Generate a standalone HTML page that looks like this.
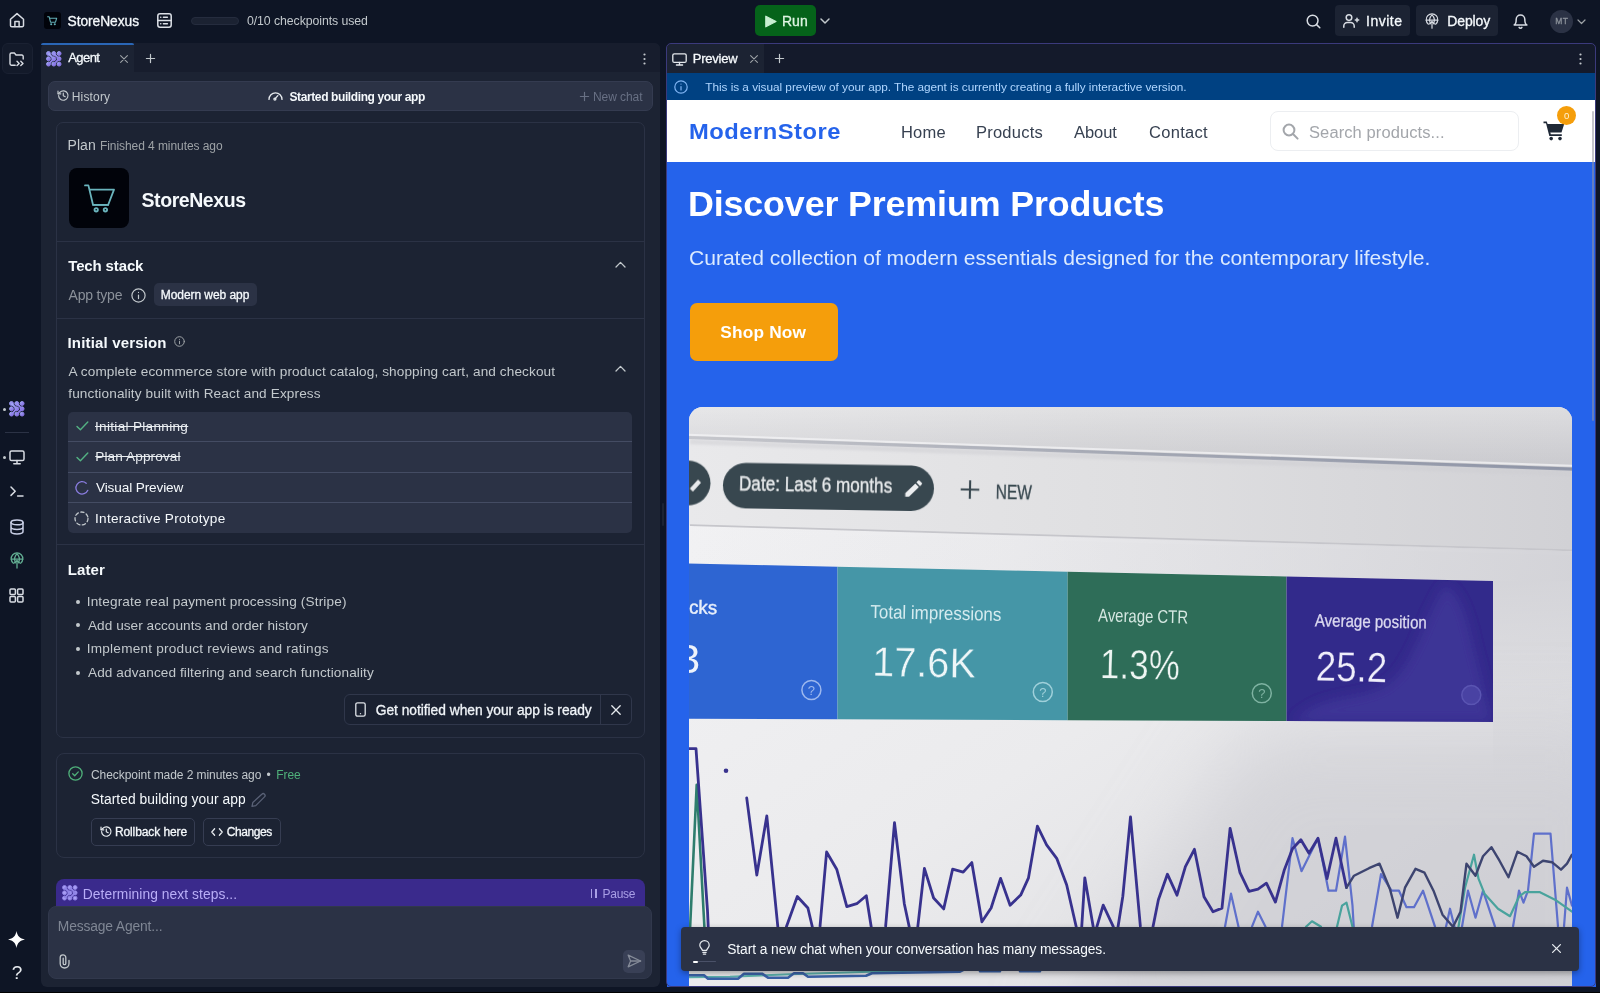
<!DOCTYPE html>
<html lang="en">
<head>
<meta charset="utf-8">
<title>StoreNexus - Replit</title>
<style>
*{box-sizing:border-box;margin:0;padding:0}
html,body{width:1600px;height:993px;overflow:hidden;background:#0e1525;color:#f5f9fc;font-family:"Liberation Sans",sans-serif;font-size:13px}
.b{position:absolute}
svg{display:block;position:absolute;overflow:visible}
.i{fill:none;stroke:currentColor;stroke-width:1.5;stroke-linecap:round;stroke-linejoin:round}
.t{position:absolute;white-space:nowrap;line-height:1;font-kerning:normal}
.wm{-webkit-text-stroke:.3px currentColor}
.ws{-webkit-text-stroke:.55px currentColor}
.wb{font-weight:700}
</style>
</head>
<body>
<!-- ===== top bar ===== -->
<div class="b" style="left:0;top:0;width:1600px;height:43px;background:#0e1525"></div>
<svg class="i" style="left:9px;top:12px;color:#d8dce3" width="16" height="16" viewBox="0 0 16 16"><path d="M1.5 7.2 8 1.6l6.500 5.600V13.400a1.300 1.300 0 0 1-1.300 1.300H2.800A1.300 1.300 0 0 1 1.500 13.400Z"/><path d="M5.900 14.600V9.400h4.200v5.200"/></svg>
<div class="b" style="left:44px;top:12px;width:17px;height:17px;background:#01030a;border-radius:3px"></div>
<svg class="i" style="left:47px;top:16px;color:#63aeb6;stroke-width:1.1" width="11" height="10" viewBox="0 0 11 10"><path d="M.6.800h1.600l1.300 5.400h5l1.200-4H2.600"/><circle cx="4.200" cy="8.300" r=".5"/><circle cx="7.800" cy="8.300" r=".5"/></svg>
<svg class="i" style="left:157px;top:13px;color:#dde1e8;stroke-width:1.500" width="15" height="15" viewBox="0 0 15 15"><rect x=".8" y=".8" width="13.400" height="13.400" rx="2.200"/><path d="M.8 7.500h13.400M3.700 4.200h.1M6.400 4.200h4M3.700 10.800h.1M6.400 10.800h4"/></svg>
<div class="b" style="left:190.500px;top:17px;width:48.500px;height:7.800px;border-radius:4px;background:#1b2232;border:1px solid #252c3e"></div>
<!-- run -->
<div class="b" style="left:755px;top:5px;width:61px;height:31px;border-radius:5px;background:#05631a"></div>
<svg style="left:765px;top:14.500px" width="12" height="13" viewBox="0 0 12 13"><path d="M.8 1.200v10.600L11 6.500Z" fill="#c9efd2" stroke="#c9efd2" stroke-width="1.200" stroke-linejoin="round"/></svg>
<svg class="i" style="left:819.500px;top:18px;color:#c2c8cc" width="10" height="6" viewBox="0 0 10 6"><path d="M1 1l4 4 4-4"/></svg>
<!-- right cluster -->
<svg class="i" style="left:1306px;top:14px;color:#d8dce3" width="15" height="15" viewBox="0 0 15 15"><circle cx="6.600" cy="6.600" r="5.400"/><path d="M10.600 10.600l3.200 3.200"/></svg>
<div class="b" style="left:1335px;top:5px;width:75px;height:31px;border-radius:4px;background:#1c2333"></div>
<svg class="i" style="left:1343px;top:13.500px;color:#d8dce3" width="17" height="14" viewBox="0 0 17 14"><circle cx="6" cy="3.600" r="2.800"/><path d="M.8 13.200v-1.200a3.600 3.600 0 0 1 3.600-3.600h3.200a3.600 3.600 0 0 1 3.600 3.600v1.200"/><path d="M14 4.300v3.400M12.300 6h3.400"/></svg>
<div class="b" style="left:1416px;top:5px;width:82px;height:31px;border-radius:4px;background:#1c2333"></div>
<svg class="i" style="left:1425px;top:13.500px;color:#d8dce3;stroke-width:1.200" width="14" height="15" viewBox="0 0 14 15"><path d="M3.400 10.200A5.800 5.800 0 1 1 10.600 10.200"/><path d="M1.300 6.200h11.400M7 .8c-2.600 2.600-2.600 6.600-1.600 9M7 .8c2.600 2.600 2.600 6.600 1.600 9"/><path d="M7 14.200V7.400M4.600 9.800 7 7.400l2.400 2.400"/></svg>
<svg class="i" style="left:1513px;top:13px;color:#d8dce3" width="15" height="16" viewBox="0 0 15 16"><path d="M3.200 6.200a4.300 4.300 0 0 1 8.600 0c0 4.600 2 5.800 2 5.800H1.200s2-1.200 2-5.800"/><path d="M6.100 14.400a1.600 1.600 0 0 0 2.800 0"/></svg>
<div class="b" style="left:1550px;top:9.500px;width:23px;height:23px;border-radius:50%;background:#2b3245"></div>
<svg class="i" style="left:1577px;top:18.500px;color:#9da2a6;stroke-width:1.200" width="9" height="6" viewBox="0 0 9 6"><path d="M1 1l3.500 3.500L8 1"/></svg>

<!-- ===== sidebar ===== -->
<div class="b" style="left:1.500px;top:43px;width:31px;height:31px;border-radius:6px;background:#131a2a;border:1px solid #1a2132"></div>
<svg class="i" style="left:8.500px;top:51.500px;color:#d8dce3;stroke-width:1.400" width="16" height="15" viewBox="0 0 16 15"><path d="M6.200 13.200H2.400A1.400 1.400 0 0 1 1 11.800V2.400A1.400 1.400 0 0 1 2.400 1h3l1.600 2h5.800a1.400 1.400 0 0 1 1.400 1.400V7"/><path d="M8 9.200l2.200 2.200L8 13.600M11.800 9.200l2.200 2.200-2.200 2.200"/></svg>
<div class="b" style="left:3px;top:407.500px;width:3px;height:3px;border-radius:50%;background:#c2c8cc"></div>
<svg style="left:8.600px;top:401.200px" width="15.600" height="15.600" viewBox="0 0 15.600 15.600"><use href="#agico" fill="url(#agg)" stroke="url(#agg)"/></svg>
<div class="b" style="left:5px;top:432px;width:24px;height:1px;background:#2b3245"></div>
<div class="b" style="left:3px;top:455.500px;width:3px;height:3px;border-radius:50%;background:#c2c8cc"></div>
<svg class="i" style="left:9px;top:449.500px;color:#d8dce3" width="16" height="15" viewBox="0 0 16 15"><rect x="1" y="1" width="14" height="9.600" rx="1.600"/><path d="M8 10.600v3M4.800 13.800h6.400"/></svg>
<svg class="i" style="left:10px;top:486px;color:#d8dce3" width="14" height="11" viewBox="0 0 14 11"><path d="M1 1l4.200 4.200L1 9.400M7.600 10h5.400"/></svg>
<svg class="i" style="left:9.500px;top:519px;color:#c9cfe6" width="14" height="16" viewBox="0 0 14 16"><ellipse cx="7" cy="3.400" rx="6" ry="2.400"/><path d="M1 3.400v9.200c0 1.300 2.700 2.400 6 2.400s6-1.100 6-2.400V3.400M1 8c0 1.300 2.700 2.400 6 2.400S13 9.300 13 8"/></svg>
<svg class="i" style="left:9.500px;top:553px;color:#62ad92;stroke-width:1.300" width="14" height="16" viewBox="0 0 14 16"><path d="M3.400 10.200A5.800 5.800 0 1 1 10.600 10.200"/><path d="M1.300 6.200h11.400M7 .8c-2.600 2.600-2.600 6.600-1.600 9M7 .8c2.600 2.600 2.600 6.600 1.600 9"/><path d="M7 15V7.400M4.600 9.800 7 7.400l2.400 2.400"/></svg>
<svg class="i" style="left:9px;top:587.500px;color:#d8dce3" width="15" height="15" viewBox="0 0 15 15"><rect x="1" y="1" width="5.400" height="5.400" rx="1"/><rect x="8.600" y="1" width="5.400" height="5.400" rx="1"/><rect x="1" y="8.600" width="5.400" height="5.400" rx="1"/><rect x="8.600" y="8.600" width="5.400" height="5.400" rx="1"/></svg>
<svg style="left:8.200px;top:931.300px" width="17" height="17" viewBox="0 0 16 16"><path d="M8 0C8.800 4.800 11.200 7.200 16 8 11.200 8.800 8.800 11.200 8 16 7.200 11.200 4.800 8.800 0 8 4.800 7.200 7.200 4.800 8 0Z" fill="#ffffff"/></svg>
<!-- ===== agent panel ===== -->
<svg width="0" height="0" style="left:0;top:0"><defs>
<g id="agico"><circle cx="2.500" cy="2.500" r="1.950"/><circle cx="7.800" cy="2.500" r="1.950"/><circle cx="13.100" cy="2.500" r="1.950"/><circle cx="2.500" cy="7.800" r="1.950"/><circle cx="7.800" cy="7.800" r="1.950"/><circle cx="13.100" cy="7.800" r="1.950"/><circle cx="2.500" cy="13.100" r="1.950"/><circle cx="7.800" cy="13.100" r="1.950"/><circle cx="13.100" cy="13.100" r="1.950"/><path d="M2.500 2.500 7.800 7.800 2.500 13.100M7.800 2.500 13.100 7.800 7.800 13.100" stroke-width="1.900" fill="none" stroke-linejoin="round"/></g>
<linearGradient id="agg" x1="0" y1="0" x2="1" y2="1"><stop offset="0" stop-color="#a4b0f6"/><stop offset=".55" stop-color="#8f80ea"/><stop offset="1" stop-color="#8672e2"/></linearGradient>
</defs></svg>
<div class="b" style="left:40.500px;top:42.500px;width:619.500px;height:944.500px;background:#1c2333;border-radius:6px"></div>
<div class="b" style="left:134px;top:42.500px;width:526px;height:29.800px;background:#171d2d;border-radius:0 6px 0 0"></div>
<div class="b" style="left:41px;top:42.500px;width:93px;height:2px;background:#2a66b6;border-radius:4px 4px 0 0"></div>
<svg style="left:45.900px;top:50.700px" width="15.600" height="15.600" viewBox="0 0 15.600 15.600"><use href="#agico" fill="url(#agg)" stroke="url(#agg)"/></svg>
<svg class="i" style="left:120px;top:55px;color:#9da2a6;stroke-width:1.100" width="8" height="8" viewBox="0 0 8 8"><path d="M.6.600l6.800 6.800M7.400.600.600 7.400"/></svg>
<svg class="i" style="left:145.500px;top:54px;color:#c2c8cc;stroke-width:1.200" width="9" height="9" viewBox="0 0 9 9"><path d="M4.500.400v8.200M.400 4.500h8.200"/></svg>
<svg style="left:643px;top:52.500px" width="3" height="12" viewBox="0 0 3 12"><circle cx="1.500" cy="1.500" r="1.100" fill="#c2c8cc"/><circle cx="1.500" cy="6" r="1.100" fill="#c2c8cc"/><circle cx="1.500" cy="10.500" r="1.100" fill="#c2c8cc"/></svg>
<div class="b" style="left:662.200px;top:502.600px;width:2.100px;height:23.600px;border-radius:1px;background:#1c2333"></div>
<!-- history bar -->
<div class="b" style="left:48px;top:81px;width:604.500px;height:29.500px;background:#2b3245;border-radius:7px;border:1px solid #343b50"></div>
<svg class="i" style="left:56.500px;top:90.300px;color:#c2c8cc;stroke-width:1.200" width="12" height="11" viewBox="0 0 12 11"><path d="M1.600 5.500a4.700 4.700 0 1 0 1.400-3.300L1.200 3.700"/><path d="M1 1v2.800h2.800M6.300 3v2.700l1.900 1"/></svg>
<svg class="i" style="left:267.500px;top:91px;color:#e6eaee;stroke-width:1.300" width="15" height="10" viewBox="0 0 15 10"><path d="M1 8.400a6.500 6.500 0 0 1 13 0"/><path d="M7.200 7.700 9.800 4.600"/><circle cx="6.900" cy="8.100" r="1"/></svg>
<svg class="i" style="left:579.500px;top:91.500px;color:#687084;stroke-width:1.200" width="9" height="9" viewBox="0 0 9 9"><path d="M4.500.400v8.200M.400 4.500h8.200"/></svg>
<!-- plan card -->
<div class="b" style="left:56px;top:121.500px;width:588.500px;height:616.500px;border:1px solid #2b3245;border-radius:7px"></div>
<div class="b" style="left:57px;top:241px;width:586.500px;height:1px;background:#2b3245"></div>
<div class="b" style="left:57px;top:318px;width:586.500px;height:1px;background:#2b3245"></div>
<div class="b" style="left:57px;top:544px;width:586.500px;height:1px;background:#2b3245"></div>
<div class="b" style="left:69px;top:168px;width:60px;height:60px;border-radius:8px;background:#01030a"></div>
<svg class="i" style="left:83.500px;top:184px;color:#6ab4bd;stroke-width:1.800" width="32" height="29" viewBox="0 0 32 29"><path d="M1 1.400h3.400l4.600 19.400h15.200l5.800-15.200H6.200"/><path d="M9 20.800h15.200"/><circle cx="12.200" cy="25.800" r="1.700"/><circle cx="21.400" cy="25.800" r="1.700"/></svg>
<svg class="i" style="left:614.500px;top:261px;color:#c2c8cc;stroke-width:1.300" width="11" height="7" viewBox="0 0 11 7"><path d="M1 6l4.500-4.600L10 6"/></svg>
<svg class="i" style="left:614.500px;top:364.500px;color:#c2c8cc;stroke-width:1.300" width="11" height="7" viewBox="0 0 11 7"><path d="M1 6l4.500-4.600L10 6"/></svg>
<svg class="i" style="left:130.500px;top:287.500px;color:#c2c8cc;stroke-width:1.200" width="15" height="15" viewBox="0 0 15 15"><circle cx="7.500" cy="7.500" r="6.600"/><path d="M7.500 7v3.600M7.500 4.400v.1"/></svg>
<svg class="i" style="left:174.200px;top:336px;color:#9da2a6;stroke-width:1" width="11" height="11" viewBox="0 0 11 11"><circle cx="5.500" cy="5.500" r="4.800"/><path d="M5.500 5.200v2.600M5.500 3.300v.1"/></svg>
<div class="b" style="left:153.800px;top:283.400px;width:102.800px;height:23.100px;border-radius:5px;background:#2b3245"></div>
<!-- tasks -->
<div class="b" style="left:68px;top:411.600px;width:564.300px;height:121.200px;border-radius:5px;background:#2b3245"></div>
<div class="b" style="left:68px;top:441.200px;width:564.300px;height:1px;background:#444c63"></div>
<div class="b" style="left:68px;top:471.600px;width:564.300px;height:1px;background:#444c63"></div>
<div class="b" style="left:68px;top:502.200px;width:564.300px;height:1px;background:#444c63"></div>
<svg class="i" style="left:75.500px;top:421px;color:#53b283;stroke-width:1.400" width="13" height="10" viewBox="0 0 13 10"><path d="M1 5.400l3.400 3.400L11.800 1"/></svg>
<svg class="i" style="left:75.500px;top:451.500px;color:#53b283;stroke-width:1.400" width="13" height="10" viewBox="0 0 13 10"><path d="M1 5.400l3.400 3.400L11.800 1"/></svg>
<svg class="i" style="left:74.600px;top:480.700px;color:#8a7de0;stroke-width:1.300" width="14" height="14" viewBox="0 0 14 14"><path d="M11.200 2.200A6.200 6.200 0 1 0 12.800 9.300"/></svg>
<svg class="i" style="left:74.400px;top:510.800px;color:#c2c8cc;stroke-width:1.300" width="15" height="15" viewBox="0 0 15 15"><circle cx="7.500" cy="7.500" r="6.500" stroke-dasharray="3.300 2.510"/></svg>
<!-- bullets -->
<div class="b" style="left:76.400px;top:599.800px;width:3.800px;height:3.800px;border-radius:50%;background:#c2c8cc"></div>
<div class="b" style="left:76.400px;top:623.400px;width:3.800px;height:3.800px;border-radius:50%;background:#c2c8cc"></div>
<div class="b" style="left:76.400px;top:647.200px;width:3.800px;height:3.800px;border-radius:50%;background:#c2c8cc"></div>
<div class="b" style="left:76.400px;top:671.200px;width:3.800px;height:3.800px;border-radius:50%;background:#c2c8cc"></div>
<!-- notify -->
<div class="b" style="left:344px;top:694px;width:288px;height:31.200px;border:1px solid #30374b;border-radius:6px;background:#1a2131"></div>
<div class="b" style="left:599.500px;top:695px;width:1px;height:29.200px;background:#30374b"></div>
<svg class="i" style="left:355px;top:702.200px;color:#dfe3e8;stroke-width:1.300" width="11" height="15" viewBox="0 0 11 15"><rect x=".8" y=".8" width="9.400" height="13.400" rx="1.800"/><path d="M5.500 11.600v.1"/></svg>
<svg class="i" style="left:611px;top:705px;color:#e6eaee;stroke-width:1.300" width="10" height="10" viewBox="0 0 10 10"><path d="M.8.800l8.400 8.400M9.200.800.800 9.200"/></svg>
<!-- checkpoint card -->
<div class="b" style="left:56px;top:753px;width:588.500px;height:105px;border:1px solid #2b3245;border-radius:8px"></div>
<svg class="i" style="left:68px;top:765.800px;color:#4fb07a;stroke-width:1.300" width="15" height="15" viewBox="0 0 15 15"><circle cx="7.500" cy="7.500" r="6.600"/><path d="M4.700 7.700l2 2 3.600-3.800"/></svg>
<svg class="i" style="left:251px;top:792.500px;color:#596176;stroke-width:1.300" width="15" height="14" viewBox="0 0 15 14"><path d="M10.800 1.200a1.900 1.900 0 0 1 2.700 2.700L4.800 12.600 1 13.400l.8-3.800Z"/></svg>
<div class="b" style="left:91px;top:818.200px;width:104.400px;height:27.400px;border:1px solid #363d52;border-radius:5px"></div>
<div class="b" style="left:202.600px;top:818.200px;width:78.600px;height:27.400px;border:1px solid #363d52;border-radius:5px"></div>
<svg class="i" style="left:99.500px;top:826.300px;color:#e6eaee;stroke-width:1.200" width="12" height="11" viewBox="0 0 12 11"><path d="M1.600 5.500a4.700 4.700 0 1 0 1.400-3.300L1.200 3.700"/><path d="M1 1v2.800h2.800M6.300 3v2.700l1.900 1"/></svg>
<svg class="i" style="left:211.400px;top:828px;color:#e6eaee;stroke-width:1.300" width="12" height="8" viewBox="0 0 12 8"><path d="M3.600.800.800 4l2.800 3.200M8.400.800 11.200 4 8.400 7.200"/></svg>
<!-- status + input -->
<div class="b" style="left:56px;top:878.700px;width:588.700px;height:40px;border-radius:8px 8px 0 0;background:#3a2a8c"></div>
<svg style="left:62px;top:885.300px" width="15.600" height="15.600" viewBox="0 0 15.600 15.600"><use href="#agico" fill="#a99ef3" stroke="#8f83e6"/></svg>
<div class="b" style="left:590.800px;top:889.200px;width:1.600px;height:8.400px;background:#a99fe6"></div>
<div class="b" style="left:595.200px;top:889.200px;width:1.600px;height:8.400px;background:#a99fe6"></div>
<div class="b" style="left:48px;top:906.200px;width:604.300px;height:73px;border-radius:8px;background:#2b3245;border:1px solid #31384c"></div>
<svg class="i" style="left:58.500px;top:954.300px;color:#c2c8cc;stroke-width:1.300" width="11" height="14" viewBox="0 0 11 14"><path d="M10 6.400v3.200a4.400 4.400 0 0 1-8.800 0V3.600a2.800 2.800 0 0 1 5.600 0v5.800a1.300 1.300 0 0 1-2.600 0V4.200"/></svg>
<div class="b" style="left:622.700px;top:950px;width:22.800px;height:22.600px;border-radius:5px;background:#394056"></div>
<svg class="i" style="left:627px;top:954.300px;color:#858b98;stroke-width:1.300" width="15" height="14" viewBox="0 0 15 14"><path d="M1.200 1.200 13.600 7 1.200 12.800 3.600 7Z"/><path d="M3.600 7h10"/></svg>
<!-- ===== preview panel ===== -->
<div class="b" style="left:666px;top:42.500px;width:930px;height:944.700px;background:#141a2b;border-radius:5px"></div>
<div class="b" style="left:667px;top:43.500px;width:96.700px;height:30px;background:#1c2333;border-radius:4px 0 0 0"></div>
<svg class="i" style="left:672px;top:52.500px;color:#e6eaee;stroke-width:1.300" width="15" height="13" viewBox="0 0 15 13"><rect x=".8" y=".8" width="13.400" height="8.600" rx="1.500"/><path d="M7.500 9.400v2.400M4.400 12h6.200"/></svg>
<svg class="i" style="left:749.500px;top:54.700px;color:#9da2a6;stroke-width:1.100" width="8" height="8" viewBox="0 0 8 8"><path d="M.6.600l6.800 6.800M7.400.600.600 7.400"/></svg>
<svg class="i" style="left:775px;top:54px;color:#c2c8cc;stroke-width:1.200" width="9" height="9" viewBox="0 0 9 9"><path d="M4.500.400v8.200M.400 4.500h8.200"/></svg>
<svg style="left:1578.500px;top:52.500px" width="3" height="12" viewBox="0 0 3 12"><circle cx="1.500" cy="1.500" r="1.100" fill="#c2c8cc"/><circle cx="1.500" cy="6" r="1.100" fill="#c2c8cc"/><circle cx="1.500" cy="10.500" r="1.100" fill="#c2c8cc"/></svg>
<div class="b" style="left:667px;top:73.400px;width:928.500px;height:26.400px;background:#004182"></div>
<svg class="i" style="left:674px;top:80px;color:#7fb4f3;stroke-width:1.200" width="14" height="14" viewBox="0 0 14 14"><circle cx="7" cy="7" r="6.200"/><path d="M7 6.600v3.400M7 4v.1"/></svg>
<!-- site header -->
<div class="b" style="left:667px;top:99.700px;width:928.500px;height:62.400px;background:#ffffff"></div>
<div class="b" style="left:1270.400px;top:110.700px;width:248.600px;height:40.200px;border:1px solid #eceef1;border-radius:8px"></div>
<svg class="i" style="left:1281.500px;top:122.800px;color:#a3a6ab;stroke-width:2" width="17" height="17" viewBox="0 0 17 17"><circle cx="7" cy="7" r="5.400"/><path d="M11 11l4.600 4.600"/></svg>
<svg style="left:1542.500px;top:120.800px" width="22" height="20" viewBox="0 0 22 20"><path d="M.5.600h3.300l.8 2.500h16.600l-2.700 8.300H7.300l.5 1.900h11v1.700H6.300L3 2.300H.5Z" fill="#1f2937"/><circle cx="8.200" cy="17.600" r="1.800" fill="#1f2937"/><circle cx="17" cy="17.600" r="1.800" fill="#1f2937"/></svg>
<div class="b" style="left:1557.200px;top:105.700px;width:19px;height:19px;border-radius:50%;background:#f59e0b"></div>
<!-- hero -->
<div class="b" style="left:667px;top:162.100px;width:928.500px;height:825px;background:#2563eb"></div>
<div class="b" style="left:689.700px;top:302.800px;width:148.200px;height:58px;border-radius:7px;background:#f59e0b"></div>
<div class="b" style="left:1591.500px;top:111px;width:2.500px;height:310px;border-radius:2px;background:rgba(150,150,160,.55)"></div>
<!-- ===== hero photo ===== -->
<svg style="left:689px;top:407.300px;overflow:hidden;border-radius:14px 14px 0 0" width="883" height="580" viewBox="689 407.300 883 580" font-family="Liberation Sans, sans-serif">
<defs>
<linearGradient id="pg1" x1="0" y1="0" x2="1" y2="0"><stop offset="0" stop-color="#e2e2e4"/><stop offset=".5" stop-color="#dadadc"/><stop offset="1" stop-color="#d6d6d9"/></linearGradient>
<linearGradient id="pg1v" x1="0" y1="0" x2="0" y2="1"><stop offset="0" stop-color="#ffffff" stop-opacity=".18"/><stop offset="1" stop-color="#8a8a96" stop-opacity=".16"/></linearGradient>
<linearGradient id="pg2" x1="0" y1="0" x2="1" y2="0"><stop offset="0" stop-color="#e9e9eb"/><stop offset=".5" stop-color="#dfdfe1"/><stop offset="1" stop-color="#d1d1d5"/></linearGradient>
<linearGradient id="pg3" x1="0" y1="0" x2="1" y2="1"><stop offset="0" stop-color="#f3f3f5"/><stop offset=".5" stop-color="#ebebed"/><stop offset="1" stop-color="#d9d9dd"/></linearGradient>
<linearGradient id="pg5" x1="0" y1="0" x2="1" y2="0"><stop offset="0" stop-color="#d2d2d7" stop-opacity="0"/><stop offset=".35" stop-color="#d2d2d7" stop-opacity=".15"/><stop offset="1" stop-color="#d0d0d5" stop-opacity=".85"/></linearGradient>
<linearGradient id="pg6" x1="0" y1="0" x2="0" y2="1"><stop offset="0" stop-color="#d0d0d5" stop-opacity=".8"/><stop offset="1" stop-color="#d0d0d5" stop-opacity="0"/></linearGradient>
<linearGradient id="pl1" x1="0" y1="0" x2="1" y2="0"><stop offset="0" stop-color="#c6c7cc"/><stop offset=".5" stop-color="#a3a7b3"/><stop offset="1" stop-color="#8e94a6"/></linearGradient>
<filter id="bl1"><feGaussianBlur stdDeviation=".7"/></filter>
<filter id="bl2"><feGaussianBlur stdDeviation="1.200"/></filter>
<filter id="bl4" x="-50%" y="-50%" width="200%" height="200%"><feGaussianBlur stdDeviation="40"/></filter>
<filter id="bl3"><feGaussianBlur stdDeviation="6"/></filter>
<clipPath id="cp4"><path d="M1286.500 576.700 1493 581.200 1493 722.300 1286.500 721.400Z"/></clipPath>
</defs>
<rect x="688" y="407" width="884" height="581" fill="url(#pg3)"/>
<path d="M688 407H1572V468.900L688 437.400Z" fill="url(#pg1)"/>
<path d="M690 407H1572V468.900L690 437.400Z" fill="url(#pg1v)"/>
<path d="M688 437.400 1572 468.900V550.700L688 525.400Z" fill="url(#pg2)"/>
<path d="M688 435 1572 466.100" stroke="#f4f4f6" stroke-width="2" opacity=".75" filter="url(#bl1)"/>
<path d="M688 437.800 1572 469.400" stroke="url(#pl1)" stroke-width="3.200" filter="url(#bl1)"/>
<path d="M690 442 1572 474" stroke="#cdcdd2" stroke-width="5" opacity=".5" filter="url(#bl2)"/>
<path d="M690 525.400 1572 550.700" stroke="#c6c6cb" stroke-width="1.800" filter="url(#bl1)"/>
<path d="M688 528.500 1572 554" stroke="#f2f2f4" stroke-width="3" opacity=".45" filter="url(#bl1)"/>
<path d="M688 526 1572 551.500V581.200H1493L688 563.800Z" fill="url(#pg5)"/>
<rect x="1493" y="581.200" width="80" height="200" fill="url(#pg6)"/>
<path d="M1250 730H1640V1040H1050Z" fill="#c4c4cb" opacity=".5" filter="url(#bl4)"/>
<!-- toolbar chips -->
<g transform="rotate(.9 828 485)" filter="url(#bl1)">
<circle cx="688" cy="485.500" r="22.500" fill="#37474f"/>
<path d="M690 491l8-9 3 3-8 9Z" fill="#e8eaec"/>
<rect x="723" y="464.500" width="211" height="45.500" rx="22.750" fill="#37474f"/>
<text x="739" y="491.600" font-size="19.500" fill="#e6e9eb" stroke="#e6e9eb" stroke-width=".3" textLength="153.200" lengthAdjust="spacingAndGlyphs">Date: Last 6 months</text>
<path d="M905.500 495.800v-3.600l9.800-9.800 3.600 3.600-9.800 9.800ZM916.400 481.300l1.700-1.700a1 1 0 0 1 1.400 0l2.200 2.200a1 1 0 0 1 0 1.400l-1.700 1.700Z" fill="#eceef0"/>
</g>
<g transform="rotate(1.200 1000 490)" filter="url(#bl1)">
<path d="M970 481.200v18.600M960.700 490.500h18.600" stroke="#37474f" stroke-width="2.100" fill="none"/>
<text x="995.700" y="499.300" font-size="19.500" fill="#37474f" stroke="#37474f" stroke-width=".3" textLength="36.300" lengthAdjust="spacingAndGlyphs">NEW</text>
</g>
<!-- metric cards -->
<g filter="url(#bl1)">
<path d="M688 563.800 837.500 567 837.500 719.600 688 719Z" fill="#2f65d2"/>
<path d="M837.500 567 1067.600 572 1067.600 720.500 837.500 719.600Z" fill="#4596a7"/>
<path d="M1067.600 572 1286.500 576.700 1286.500 721.400 1067.600 720.500Z" fill="#2d6d59"/>
<path d="M1286.500 576.700 1493 581.200 1493 722.300 1286.500 721.400Z" fill="#33298b"/>
<g clip-path="url(#cp4)"><path d="M1445 585c20 10 25 50 32 75s8 40 16 62h-200c30-30 60-20 90-35s40-70 62-102Z" fill="#5a53b5" opacity=".28" filter="url(#bl3)"/></g>
</g>
<g filter="url(#bl1)">
<text transform="rotate(1.200 689 613.8)" x="689" y="613.8" font-size="19" fill="#e9f0fb" textLength="28" lengthAdjust="spacingAndGlyphs" stroke="#e9f0fb" stroke-width=".4">cks</text>
<text x="677" y="673.600" font-size="41.500" fill="#eef3fb">3</text>
<circle cx="811.4" cy="690.3" r="9.500" fill="none" stroke="#9db8ee" stroke-width="1.500"/><text x="807.8" y="695.0" font-size="13" fill="#9db8ee">?</text>
<text transform="rotate(1.200 870.3 618.4)" x="870.3" y="618.4" font-size="19" fill="#d5ebef" textLength="131" lengthAdjust="spacingAndGlyphs">Total impressions</text>
<text transform="rotate(1.200 872 676)" x="872" y="676" font-size="41.5" fill="#eef6f8" textLength="103.6" lengthAdjust="spacingAndGlyphs" stroke="#4596a7" stroke-width=".4">17.6K</text>
<circle cx="1042.8" cy="692.3" r="9.500" fill="none" stroke="#9fd0da" stroke-width="1.500"/><text x="1039.2" y="697.0" font-size="13" fill="#9fd0da">?</text>
<text transform="rotate(1.200 1098 621.8)" x="1098" y="621.8" font-size="18.5" fill="#d6e8e2" textLength="90" lengthAdjust="spacingAndGlyphs">Average CTR</text>
<text transform="rotate(1.200 1099.8 678.4)" x="1099.8" y="678.4" font-size="41.5" fill="#eef5f2" textLength="79.7" lengthAdjust="spacingAndGlyphs" stroke="#2d6d59" stroke-width=".4">1.3%</text>
<circle cx="1261.8" cy="693.6" r="9.500" fill="none" stroke="#7fb3a2" stroke-width="1.500"/><text x="1258.2" y="698.3" font-size="13" fill="#7fb3a2">?</text>
<text transform="rotate(1.200 1314.7 626.5)" x="1314.7" y="626.5" font-size="17.5" fill="#dcdaf0" textLength="112" lengthAdjust="spacingAndGlyphs" stroke="#dcdaf0" stroke-width=".3">Average position</text>
<text transform="rotate(1.200 1315.5 680.9)" x="1315.5" y="680.9" font-size="42" fill="#efeefa" textLength="71.4" lengthAdjust="spacingAndGlyphs" stroke="#33298b" stroke-width=".3">25.2</text>
<circle cx="1471.300" cy="695.400" r="9.500" fill="#4a43a3" stroke="#5a54b2" stroke-width="1.500"/>
</g>
<!-- chart -->
<g fill="none" stroke-linejoin="round" stroke-linecap="round" filter="url(#bl1)">
<path d="M688 977.500 730 977 790 974.500 870 972 960 970" stroke="#5db3ae" stroke-width="2"/>
<path d="M688 975.500 704 975.500 708 979 738 979 744 974 762 974 768 978 788 978 794 973.500 803 973.500 808 977 866 976 872 973.500 960 972 966 969M980 971.500 1000 971.500M1020 971.500 1040 971.500" stroke="#3a62a8" stroke-width="2.600"/>
<path d="M690 930 696.700 785 704.400 927 706 966" stroke="#2f7d6d" stroke-width="2.600"/>
<path d="M1225 927 1231 894 1238.500 927 1244 960 1252 927 1258 912 1265.500 927 1272 960 1282 927 1292.500 838.500 1301.500 871.500 1318 838.500 1328.500 891 1336 891 1345 837 1352.500 906 1356 966 1364 966 1372 927 1381 874.500 1391.500 891 1399 891 1406.500 907.500 1414 907.500 1423 891 1435 927 1440 960 1446 927 1450 909 1454.500 927 1458 950 1462 927 1468 891 1475.500 918 1483 891 1495 927 1504 965 1513 927 1519 891 1523.500 903 1528 891 1534 834 1550.500 834 1558 927 1561 950 1564 927 1567 888 1572 906" stroke="#5f70cb" stroke-width="2.200"/>
<path d="M1298 966 1306 927 1312 921.600 1321 927 1330 960 1337 927 1342 906 1346.500 903 1352.500 927 1358 966 1452 966 1465 888 1474 855 1478.500 879 1484.500 894 1498 909 1510 916.500 1519 897 1525 892.500 1540 892.500 1555 900 1572 912" stroke="#4aa39d" stroke-width="2.200"/>
<path d="M688 749 696 749 707.500 911 710 966" stroke="#39338e" stroke-width="2.800"/>
<path d="M746.700 798.200 756.800 875.300 766.800 816.300 777.800 927 782 965 786.400 927 797.300 896.800 807.900 908.300 812.300 927 816 960 820 927 826.600 852.300 836.700 869.500 846.800 906.900 856.800 904 866.300 896 871.200 927 878 966 885.600 927 894.500 822.900 904.300 904 909.200 927 913.500 965 917.800 927 924.400 868.600 933.600 898.300 943.700 909.200 952.600 869.500 963.200 872.400 971.800 862.900 981.900 922.100 991.100 908.300 1000.600 878.700 1010.100 905.500 1020.700 895.400 1028.500 878.100 1037.400 826.400 1046.600 845.100 1056.700 858.600 1066.700 885.300 1076.200 927 1080 955 1084.800 878.100 1093.200 927 1095 940 1096.900 927 1103.200 905.500 1113.300 927 1116 940 1122.800 896.800 1130.500 817.200 1140.400 927 1146 966 1153 927 1158.400 900 1167.400 874.500 1177 895.500 1185.400 867 1194.400 849.600 1204 897 1213 912 1222 908.400 1230.100 828.600 1240 873 1249 891.600 1258 889.500 1266.400 883.500 1275.400 902.400 1284.400 870 1292.500 849 1300.900 840 1309 853.500 1318 838.500 1327 879 1336 838.500 1346.500 888" stroke="#39338e" stroke-width="2.800"/>
<path d="M1346.500 888 1354 876 1369 868.500 1379.500 864 1390 889.500 1397.500 918 1405 888 1415.500 869.100 1424.500 873 1433.500 891 1442.500 915 1453 927 1460.500 912 1466.500 864 1475.500 876 1483 856.500 1491.400 847.500 1499.500 861 1508.500 877.500 1517.500 852 1526.500 856.500 1534 867 1543 861 1552 862.500 1561 870 1567 864 1572 855" stroke="#3e4470" stroke-width="2.400"/>
<circle cx="726" cy="771" r="2.300" fill="#39338e" stroke="none"/>
</g>
</svg>
<!-- toast -->
<div class="b" style="left:681.400px;top:927px;width:897.600px;height:43.600px;border-radius:4px;background:#2b3245;box-shadow:0 2px 6px rgba(0,0,0,.35)"></div>
<svg class="i" style="left:699px;top:940.300px;color:#e6eaee;stroke-width:1.200" width="11" height="15" viewBox="0 0 11 15"><path d="M3.400 10.400C3.400 8.800.800 7.900.800 5.300a4.700 4.700 0 0 1 9.400 0c0 2.600-2.600 3.500-2.600 5.100Z"/><path d="M3.800 12.300h3.400M4.300 14.100h2.400"/></svg>
<div class="b" style="left:693px;top:960.800px;width:23px;height:1.400px;border-radius:1px;background:#4a5168"></div>
<div class="b" style="left:693px;top:960.500px;width:4.500px;height:2px;border-radius:1px;background:#ffffff"></div>
<svg class="i" style="left:1552px;top:944px;color:#e6eaee;stroke-width:1.300" width="9" height="9" viewBox="0 0 9 9"><path d="M.6.600l7.800 7.800M8.400.600.600 8.400"/></svg>
<!-- frame overlay: preview border + cover below panels -->
<div class="b" style="left:666px;top:42.500px;width:930px;height:944.700px;border:1px solid #3b3a7c;border-radius:5px;pointer-events:none"></div>
<div class="b" style="left:660px;top:987.200px;width:940px;height:6px;background:#0e1525"></div>
<div class="b" style="left:1596px;top:43px;width:4px;height:950px;background:#0e1525"></div>
<div class="b" style="left:0;top:991.800px;width:1600px;height:1.200px;background:#000000"></div>
<!-- ===== text layer ===== -->
<div style="position:absolute;left:0;top:0;width:1600px;height:993px;will-change:transform">
<span class="t wm" style="left:67.50px;top:14.92px;font-size:13.8px;color:#f5f9fc;letter-spacing:-0.056px">StoreNexus</span>
<span class="t" style="left:247.00px;top:15.09px;font-size:12.3px;color:#c2c8cc;letter-spacing:-0.075px">0/10 checkpoints used</span>
<span class="t wm" style="left:782.00px;top:14.15px;font-size:14px;color:#dff5e3;letter-spacing:0.000px">Run</span>
<span class="t wm" style="left:1366.00px;top:14.15px;font-size:14px;color:#f5f9fc;letter-spacing:0.510px">Invite</span>
<span class="t wm" style="left:1447.35px;top:14.15px;font-size:14px;color:#f5f9fc;letter-spacing:-0.150px">Deploy</span>
<span class="t wm" style="left:1555.15px;top:16.55px;font-size:8.5px;color:#8b919a;letter-spacing:0.450px">MT</span>
<span class="t wm" style="left:68.25px;top:51.00px;font-size:13px;color:#f5f9fc;letter-spacing:-0.562px">Agent</span>
<span class="t" style="left:71.75px;top:91.04px;font-size:12px;color:#c2c8cc;letter-spacing:0.167px">History</span>
<span class="t wb" style="left:289.50px;top:90.84px;font-size:12px;color:#f5f9fc;letter-spacing:-0.396px">Started building your app</span>
<span class="t" style="left:593.00px;top:90.84px;font-size:12px;color:#687084;letter-spacing:-0.071px">New chat</span>
<span class="t" style="left:67.50px;top:137.95px;font-size:14px;color:#c2c8cc;letter-spacing:0.083px">Plan</span>
<span class="t" style="left:100.00px;top:140.04px;font-size:12px;color:#9da2a6;letter-spacing:-0.071px">Finished 4 minutes ago</span>
<span class="t wb" style="left:141.50px;top:190.99px;font-size:19.5px;color:#f5f9fc;letter-spacing:-0.428px">StoreNexus</span>
<span class="t wb" style="left:68.25px;top:257.90px;font-size:15px;color:#f5f9fc;letter-spacing:-0.139px">Tech stack</span>
<span class="t" style="left:68.50px;top:287.65px;font-size:14px;color:#8b919a;letter-spacing:-0.179px">App type</span>
<span class="t wm" style="left:160.75px;top:288.59px;font-size:12px;color:#f5f9fc;letter-spacing:-0.058px">Modern web app</span>
<span class="t wb" style="left:67.50px;top:335.30px;font-size:15px;color:#f5f9fc;letter-spacing:0.164px">Initial version</span>
<span class="t" style="left:68.50px;top:364.99px;font-size:13.6px;color:#c2c8cc;letter-spacing:0.110px">A complete ecommerce store with product catalog, shopping cart, and checkout</span>
<span class="t" style="left:68.25px;top:387.09px;font-size:13.6px;color:#c2c8cc;letter-spacing:0.128px">functionality built with React and Express</span>
<span class="t" style="left:95.00px;top:420.49px;font-size:13.6px;color:#e8ecf0;letter-spacing:0.300px;text-decoration:line-through">Initial Planning</span>
<span class="t" style="left:95.25px;top:450.49px;font-size:13.6px;color:#e8ecf0;letter-spacing:0.112px;text-decoration:line-through">Plan Approval</span>
<span class="t" style="left:96.00px;top:480.99px;font-size:13.6px;color:#f5f9fc;letter-spacing:-0.119px">Visual Preview</span>
<span class="t" style="left:95.00px;top:511.69px;font-size:13.6px;color:#f5f9fc;letter-spacing:0.280px">Interactive Prototype</span>
<span class="t wb" style="left:67.65px;top:562.10px;font-size:15px;color:#f5f9fc;letter-spacing:0.125px">Later</span>
<span class="t" style="left:86.75px;top:595.49px;font-size:13.6px;color:#c2c8cc;letter-spacing:0.141px">Integrate real payment processing (Stripe)</span>
<span class="t" style="left:88.00px;top:618.69px;font-size:13.6px;color:#c2c8cc;letter-spacing:0.041px">Add user accounts and order history</span>
<span class="t" style="left:86.75px;top:642.29px;font-size:13.6px;color:#c2c8cc;letter-spacing:0.229px">Implement product reviews and ratings</span>
<span class="t" style="left:88.00px;top:666.29px;font-size:13.6px;color:#c2c8cc;letter-spacing:0.100px">Add advanced filtering and search functionality</span>
<span class="t wm" style="left:375.70px;top:704.32px;font-size:13.8px;color:#f0f4f8;letter-spacing:-0.029px">Get notified when your app is ready</span>
<span class="t" style="left:91.00px;top:768.64px;font-size:12px;color:#c2c8cc;letter-spacing:-0.064px">Checkpoint made 2 minutes ago</span>
<span class="t" style="left:266.62px;top:768.64px;font-size:12px;color:#c2c8cc;letter-spacing:0.000px">•</span>
<span class="t" style="left:276.30px;top:768.64px;font-size:12px;color:#4fb07a;letter-spacing:-0.117px">Free</span>
<span class="t" style="left:90.75px;top:792.82px;font-size:13.8px;color:#f5f9fc;letter-spacing:0.062px">Started building your app</span>
<span class="t wm" style="left:114.90px;top:825.59px;font-size:12px;color:#f5f9fc;letter-spacing:-0.096px">Rollback here</span>
<span class="t wm" style="left:226.65px;top:825.59px;font-size:12px;color:#f5f9fc;letter-spacing:-0.425px">Changes</span>
<span class="t" style="left:82.75px;top:887.52px;font-size:13.8px;color:#b9aef7;letter-spacing:0.073px">Determining next steps...</span>
<span class="t" style="left:602.50px;top:888.04px;font-size:12px;color:#a99fe6;letter-spacing:-0.250px">Pause</span>
<span class="t" style="left:57.75px;top:919.72px;font-size:13.8px;color:#7f8694;letter-spacing:-0.117px">Message Agent...</span>
<span class="t" style="left:11.70px;top:962.92px;font-size:19px;color:#e6eaee;letter-spacing:0.000px">?</span>
<span class="t wm" style="left:692.75px;top:51.80px;font-size:13px;color:#f5f9fc;letter-spacing:-0.225px">Preview</span>
<span class="t" style="left:705.25px;top:82.01px;font-size:11.8px;color:#afd6ff;letter-spacing:-0.031px">This is a visual preview of your app. The agent is currently creating a fully interactive version.</span>
<span class="t wb" style="left:688.50px;top:120.84px;font-size:22.4px;color:#2563eb;letter-spacing:0.475px;transform:scaleX(1.06);transform-origin:0 0">ModernStore</span>
<span class="t" style="left:901.25px;top:124.79px;font-size:15.6px;color:#374151;letter-spacing:0.167px;transform:scaleX(1.06);transform-origin:0 0">Home</span>
<span class="t" style="left:976.05px;top:124.79px;font-size:15.6px;color:#374151;letter-spacing:0.200px;transform:scaleX(1.06);transform-origin:0 0">Products</span>
<span class="t" style="left:1074.40px;top:124.79px;font-size:15.6px;color:#374151;letter-spacing:-0.087px;transform:scaleX(1.06);transform-origin:0 0">About</span>
<span class="t" style="left:1149.15px;top:124.79px;font-size:15.6px;color:#374151;letter-spacing:0.275px;transform:scaleX(1.06);transform-origin:0 0">Contact</span>
<span class="t" style="left:1309.35px;top:124.99px;font-size:15.6px;color:#a3a6ab;letter-spacing:0.079px;transform:scaleX(1.06);transform-origin:0 0">Search products...</span>
<span class="t" style="left:1564.10px;top:111.16px;font-size:9.5px;color:#fff3d6;letter-spacing:0.000px">0</span>
<span class="t wb" style="left:688.45px;top:186.57px;font-size:34.3px;color:#ffffff;letter-spacing:-0.142px;transform:scaleX(1.045);transform-origin:0 0">Discover Premium Products</span>
<span class="t" style="left:688.80px;top:248.95px;font-size:19.9px;color:#dbeafe;letter-spacing:-0.020px;transform:scaleX(1.06);transform-origin:0 0">Curated collection of modern essentials designed for the contemporary lifestyle.</span>
<span class="t wb" style="left:720.25px;top:323.76px;font-size:17.3px;color:#ffffff;letter-spacing:0.179px">Shop Now</span>
<span class="t" style="left:727.25px;top:942.92px;font-size:13.8px;color:#f5f9fc;letter-spacing:-0.082px">Start a new chat when your conversation has many messages.</span>
</div>
</body>
</html>
